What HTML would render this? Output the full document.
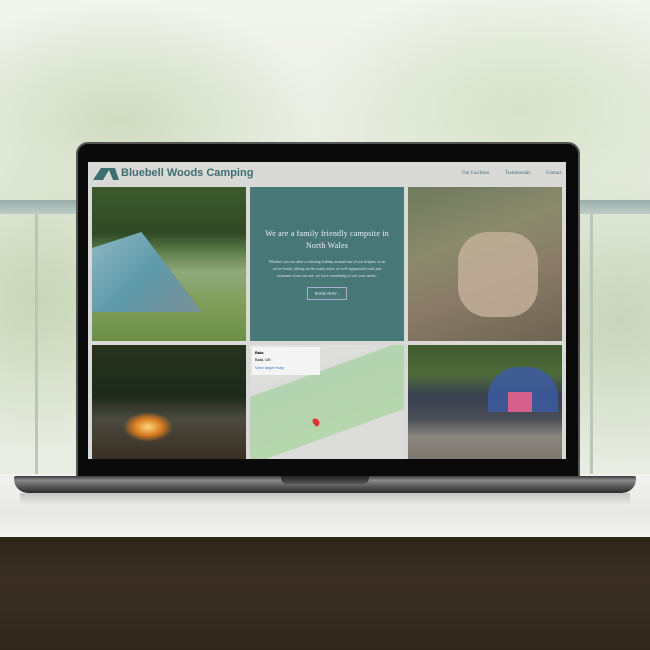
<!DOCTYPE html>
<html><head><style>
*{margin:0;padding:0;box-sizing:border-box}
body{width:650px;height:650px;overflow:hidden;position:relative;font-family:"Liberation Serif",serif;
background:radial-gradient(ellipse 200px 120px at 120px 120px,#cfdcc0,transparent),radial-gradient(ellipse 220px 130px at 520px 110px,#d6e2c8,transparent),radial-gradient(ellipse 150px 150px at 40px 300px,#c8d6b6,transparent),radial-gradient(ellipse 150px 150px at 620px 320px,#c8d5bb,transparent),linear-gradient(#f2f4ee,#e4eadc 40%,#e8ece2 70%,#f0f0ec)}
.abs{position:absolute}
.rail{left:0;width:650px;top:200px;height:14px;background:linear-gradient(#8fa4a2,#b9c8c4);opacity:.85}
.table{left:0;top:474px;width:650px;height:64px;background:linear-gradient(#f2f2f0,#e8e8e6 60%,#f4f4f2)}
.wood{left:0;top:537px;width:650px;height:113px;background:linear-gradient(#2e2519,#3a2f22 40%,#30271c)}
.lid{left:76px;top:142px;width:504px;height:336px;background:#0a0a0a;border-radius:12px 12px 0 0;border:2px solid #555}
.screen{left:88px;top:162px;width:478px;height:297px;background:#d9d9d7;overflow:hidden}
.logo{left:33px;top:5px;font:bold 11px "Liberation Sans",sans-serif;color:#3d6f70}
.nav{top:9px;font-size:5px;color:#3d6f70}
.c{position:absolute;width:154px}
.base{left:14px;top:476px;width:622px;height:17px;background:linear-gradient(#3a3a3a,#8a8a8a 25%,#5a5a5a 60%,#2a2a2a);border-radius:2px 2px 14px 14px}
.notch{left:281px;top:476px;width:88px;height:8px;background:linear-gradient(#222,#555);border-radius:0 0 6px 6px}
.shadow{left:20px;top:493px;width:610px;height:12px;background:linear-gradient(rgba(120,120,120,.35),transparent)}
</style></head><body>
<div class="abs rail"></div>
<div class="abs" style="left:35px;top:214px;width:3px;height:260px;background:#b8c8b4"></div>
<div class="abs" style="left:590px;top:214px;width:3px;height:260px;background:#b8c8b4"></div>
<div class="abs table"></div>
<div class="abs wood"></div>
<div class="abs shadow"></div>
<div class="abs lid"></div>
<div class="abs screen">
 <svg class="abs" style="left:5px;top:5px" width="26" height="13"><polygon points="0,13 8,1 22,1 26,13" fill="#3d6f70"/><polygon points="10,13 16,3 20,13" fill="#d9d9d7"/></svg>
 <div class="abs logo">Bluebell Woods Camping</div>
 <div class="abs nav" style="left:374px">Our Facilities</div>
 <div class="abs nav" style="left:417px">Testimonials</div>
 <div class="abs nav" style="left:458px">Contact</div>
 <div class="c" style="left:4px;top:25px;height:154px;background:linear-gradient(#3d5a2e 0,#2f4a25 30%,#6a8a55 45%,#8fa87a 55%,#7f9f5a 75%,#6c8f48)"></div>
 <div class="abs" style="left:4px;top:70px;width:110px;height:80px;background:linear-gradient(135deg,#8fb8c4,#5e9aaa 50%,#7a9096);clip-path:polygon(0 20%,45% 0,100% 100%,0 100%)"></div>
 <div class="c" style="left:162px;top:25px;height:154px;background:#487778;color:#eef;text-align:center">
  <div style="margin-top:41px;font-size:8px;line-height:12px;letter-spacing:.2px">We are a family friendly campsite in<br>North Wales</div>
  <div style="margin:6px 16px 0;font-size:4px;line-height:7px;color:#d8e4e4">Whether you are after a relaxing holiday around one of our firepits, or an active break, hiking on the many miles of well-signposted trails just moments from our site, we have something to suit your needs.</div>
  <div style="margin:8px auto 0;width:40px;height:13px;border:1px solid #aac;font-size:4px;line-height:11px">BOOK NOW ›</div>
 </div>
 <div class="c" style="left:320px;top:25px;height:154px;background:linear-gradient(160deg,#6f7a5c,#8a8a6c 35%,#8a7c68 60%,#6e6352)"></div>
 <div class="abs" style="left:370px;top:70px;width:80px;height:85px;background:#c6b39c;border-radius:30px;opacity:.8"></div>
 <div class="c" style="left:4px;top:183px;height:114px;background:linear-gradient(#27331f,#1e2a1a 45%,#4b4a40 65%,#3a2f22)"></div>
 <div class="abs" style="left:35px;top:250px;width:50px;height:30px;background:radial-gradient(#ffd27a,#d77a20 40%,transparent 70%)"></div>
 <div class="c" style="left:162px;top:183px;height:114px;background:linear-gradient(160deg,#e4e4e2 0,#dcdcda 30%,#b4d3b0 31%,#b6d6ae 70%,#dcdcda 71%)"></div>
 <div class="abs" style="left:164px;top:185px;width:68px;height:28px;background:#f4f4f4;font:bold 4px 'Liberation Sans',sans-serif;padding:3px"><div>Bala</div><div style="font-weight:normal;margin-top:2px">Bala, UK</div><div style="font-weight:normal;margin-top:3px;color:#3a6fd0">View larger map</div></div>
 <div class="abs" style="left:225px;top:256px;width:6px;height:8px;background:#d33;border-radius:50% 50% 50% 0;transform:rotate(-45deg)"></div>
 <div class="c" style="left:320px;top:183px;height:114px;background:linear-gradient(#3e5a2e,#4f6b3a 25%,#394050 45%,#4a4e56 65%,#8a8780 80%,#7c7870)"></div>
 <div class="abs" style="left:400px;top:205px;width:70px;height:45px;background:#3c5aa0;border-radius:30px 30px 0 0;opacity:.85"></div>
 <div class="abs" style="left:420px;top:230px;width:24px;height:20px;background:#d4608a"></div>
</div>
<div class="abs base"></div>
<div class="abs notch"></div>
</body></html>
